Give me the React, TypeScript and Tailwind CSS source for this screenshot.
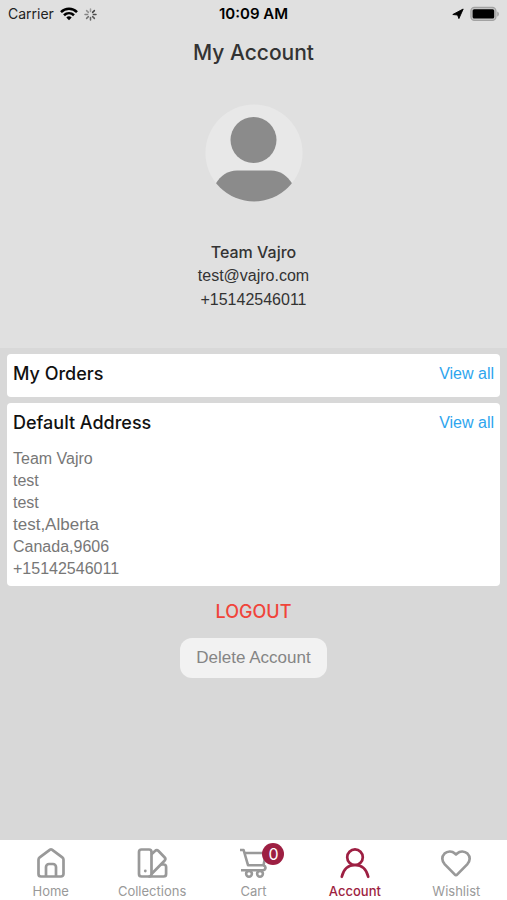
import type { ReactNode } from "react";

const helvetica = "font-['Liberation_Sans',Arial,sans-serif]";
const inter = "font-[Inter,sans-serif]";

function StatusBar() {
  return (
    <div className="grid h-7 grid-cols-3 items-center px-2 text-sm leading-7 text-black">
      <div className="flex items-center gap-[6px] text-[#222]">
        <span>Carrier</span>
        <svg width="18" height="14" viewBox="0 0 18 14" fill="none" stroke="#000" strokeWidth="2.6" aria-hidden="true">
          <path d="M1 5.1C5.5.7 12.5.7 17 5.1" />
          <path d="M4 8.2c2.9-2.7 7.1-2.7 10 0" />
          <path d="M6.3 10.4c1.6-1.4 3.8-1.4 5.4 0L9 13.2z" fill="#000" stroke="none" />
        </svg>
        <svg width="13" height="13" viewBox="0 0 13 13" stroke="#444" strokeWidth="1.5" strokeLinecap="round" aria-hidden="true">
          <path d="M6.5 1v2.6" opacity=".45" />
          <path d="M10.4 2.6 8.6 4.4" />
          <path d="M12 6.5H9.4" opacity=".95" />
          <path d="M10.4 10.4 8.6 8.6" opacity=".85" />
          <path d="M6.5 12V9.4" opacity=".8" />
          <path d="M2.6 10.4l1.8-1.8" opacity=".7" />
          <path d="M1 6.5h2.6" opacity=".6" />
          <path d="M2.6 2.6l1.8 1.8" opacity=".5" />
        </svg>
      </div>
      <time className="text-center text-[15px] font-semibold">10:09 AM</time>
      <div className="flex items-center justify-end gap-[6px]">
        <svg width="12" height="12" viewBox="0 0 12 12" aria-hidden="true">
          <path d="M11.2 1 6.9 10.6 5.6 7 .8 6.5z" fill="#000" stroke="#000" strokeWidth=".9" strokeLinejoin="round" />
        </svg>
        <svg width="29" height="16" viewBox="0 0 29 16" aria-hidden="true">
          <rect x=".9" y="1.4" width="25" height="13" rx="3.6" fill="#c4c4c4" stroke="#a2a2a2" strokeWidth="1.3" />
          <rect x="2.6" y="3.2" width="21.6" height="9.4" rx="1.6" fill="#000" />
          <path d="M27.3 5.4c2 1 2 4.2 0 5.2z" fill="#9a9a9a" />
        </svg>
      </div>
    </div>
  );
}

function Avatar() {
  return (
    <svg className="mt-9" width="98" height="98" viewBox="0 0 98 98" role="img" aria-label="Profile picture">
      <defs>
        <clipPath id="avatar-circle">
          <circle cx="49" cy="49" r="48.5" />
        </clipPath>
      </defs>
      <circle cx="49" cy="49" r="48.5" fill="#e8e8e8" />
      <g clipPath="url(#avatar-circle)" fill="#8b8b8b">
        <circle cx="48.5" cy="36" r="23" />
        <path d="M10.5 80C15.5 71.5 23 66.5 32 66.5h34c9 0 16 5 21.5 13.5L86 98H10z" />
      </g>
    </svg>
  );
}

function Card({ title, children }: { title: string; children?: ReactNode }) {
  return (
    <section className="rounded bg-white px-[6px] pt-2 pb-[6px]">
      <div className="flex items-center justify-between">
        <h2 className={`${inter} text-lg leading-6 font-medium text-[#111]`}>{title}</h2>
        <a href="#" className="text-base leading-6 text-[#2ea5ee]">View all</a>
      </div>
      {children}
    </section>
  );
}

function HomeIcon() {
  return (
    <svg width="32" height="32" viewBox="0 0 32 32" fill="none" stroke="currentColor" strokeWidth="2.7" strokeLinejoin="round" aria-hidden="true">
      <path d="M15.1 2.6 4.7 10.3a3 3 0 0 0-1.2 2.4V27a2.5 2.5 0 0 0 2.5 2.5h20a2.5 2.5 0 0 0 2.5-2.5V12.7a3 3 0 0 0-1.2-2.4L16.9 2.6a1.5 1.5 0 0 0-1.8 0z" />
      <path d="M11 29.5V20a3 3 0 0 1 3-3h4a3 3 0 0 1 3 3v9.5" />
    </svg>
  );
}

function CollectionsIcon() {
  return (
    <svg width="32" height="32" viewBox="0 0 32 32" fill="none" stroke="currentColor" strokeWidth="2.7" strokeLinejoin="round" aria-hidden="true">
      <rect x="3" y="2.5" width="12.5" height="27" rx="2.5" />
      <path d="M15.5 7.2 19 4a2.5 2.5 0 0 1 3.5 0l6 6.2a2.5 2.5 0 0 1 0 3.5L15.5 27" />
      <path d="M25 17.5h2.600a2.500 2.500 0 0 1 2.500 2.500v7a2.500 2.500 0 0 1-2.500 2.500H12.500" />
      <circle cx="9.3" cy="24" r="1.4" fill="currentColor" stroke="none" />
    </svg>
  );
}

function CartIcon() {
  return (
    <svg width="32" height="32" viewBox="0 0 32 32" fill="none" stroke="currentColor" strokeWidth="2.6" strokeLinejoin="round" aria-hidden="true">
      <path d="M3 3h3.6L11 18.2h15.5L29 6H7.5" />
      <path d="M26.5 18.2c3.2 1.4 2.2 5-.8 5H4" />
      <circle cx="12" cy="26.8" r="2.9" />
      <circle cx="23" cy="26.8" r="2.9" />
    </svg>
  );
}

function AccountIcon() {
  return (
    <svg width="32" height="32" viewBox="0 0 32 32" fill="none" stroke="currentColor" strokeWidth="2.7" strokeLinecap="round" aria-hidden="true">
      <circle cx="16" cy="10.2" r="7.8" />
      <path d="M2.8 29.8C4.5 22.4 9 18 16 18s11.5 4.4 13.2 11.8" />
    </svg>
  );
}

function WishlistIcon() {
  return (
    <svg width="32" height="32" viewBox="0 0 32 32" fill="none" stroke="currentColor" strokeWidth="2.7" strokeLinejoin="round" aria-hidden="true">
      <path d="M14.9 27.6 4.8 17.4C1.6 14 1.5 9.5 4.5 6.6c3-2.7 7.5-2.8 10.4-.2l1.1 1 1.1-1c2.9-2.6 7.4-2.5 10.4.2 3 2.9 2.9 7.4-.3 10.8L17.1 27.6a1.5 1.5 0 0 1-2.2 0z" />
    </svg>
  );
}

const tabs = [
  { label: "Home", icon: <HomeIcon /> },
  { label: "Collections", icon: <CollectionsIcon /> },
  { label: "Cart", icon: <CartIcon />, badge: 0 },
  { label: "Account", icon: <AccountIcon />, active: true },
  { label: "Wishlist", icon: <WishlistIcon /> },
];

const address = [
  { text: "Team Vajro" },
  { text: "test" },
  { text: "test" },
  { text: "test,Alberta", large: true },
  { text: "Canada,9606" },
  { text: "+15142546011" },
];

export default function App() {
  return (
    <div className={`${helvetica} flex min-h-screen flex-col bg-[#d8d8d8]`}>
      <header className={`${inter} bg-[#e0e0e0]`}>
        <StatusBar />
        <div className="flex flex-col items-center pt-[10px] pb-9 text-[#333]">
          <h1 className="text-[21px] leading-[30px] font-medium">My Account</h1>
          <Avatar />
          <div className={`${helvetica} mt-[38px] text-center text-base leading-6`}>
            <p className={`${inter} font-medium`}>Team Vajro</p>
            <p>test@vajro.com</p>
            <p>+15142546011</p>
          </div>
        </div>
      </header>

      <main className="flex flex-1 flex-col gap-[6px] px-[7px] pt-[6px]">
        <Card title="My Orders">
          <div className="h-[5px]" />
        </Card>
        <Card title="Default Address">
          <address className="mt-[13px] text-base leading-[22px] text-[#777] not-italic">
            {address.map((line, index) => (
              <p key={index} className={line.large ? "text-[17px] leading-[22px]" : undefined}>
                {line.text}
              </p>
            ))}
          </address>
        </Card>
        <div className="mt-2 flex flex-col items-center gap-[14px]">
          <button type="button" className={`${inter} text-lg leading-6 font-medium text-[#f0443a]`}>LOGOUT</button>
          <button type="button" className="h-10 rounded-xl bg-[#f2f2f2] px-4 text-[17px] leading-6 text-[#858585]">
            Delete Account
          </button>
        </div>
      </main>

      <nav className={`${inter} grid h-[60px] grid-cols-5 bg-white`}>
        {tabs.map((tab) => (
          <a
            key={tab.label}
            href="#"
            aria-current={tab.active ? "page" : undefined}
            className={`flex flex-col items-center pt-[7px] text-[13px] ${tab.active ? "font-medium text-[#9d1f42]" : "text-[#999]"}`}
          >
            <span className="relative">
              {tab.icon}
              {tab.badge !== undefined && (
                <span className="absolute -top-1 left-[25px] flex size-[22px] items-center justify-center rounded-full bg-[#9d1f42] text-base leading-none font-normal text-white">
                  {tab.badge}
                </span>
              )}
            </span>
            <span className="mt-1 leading-4">{tab.label}</span>
          </a>
        ))}
      </nav>
    </div>
  );
}
